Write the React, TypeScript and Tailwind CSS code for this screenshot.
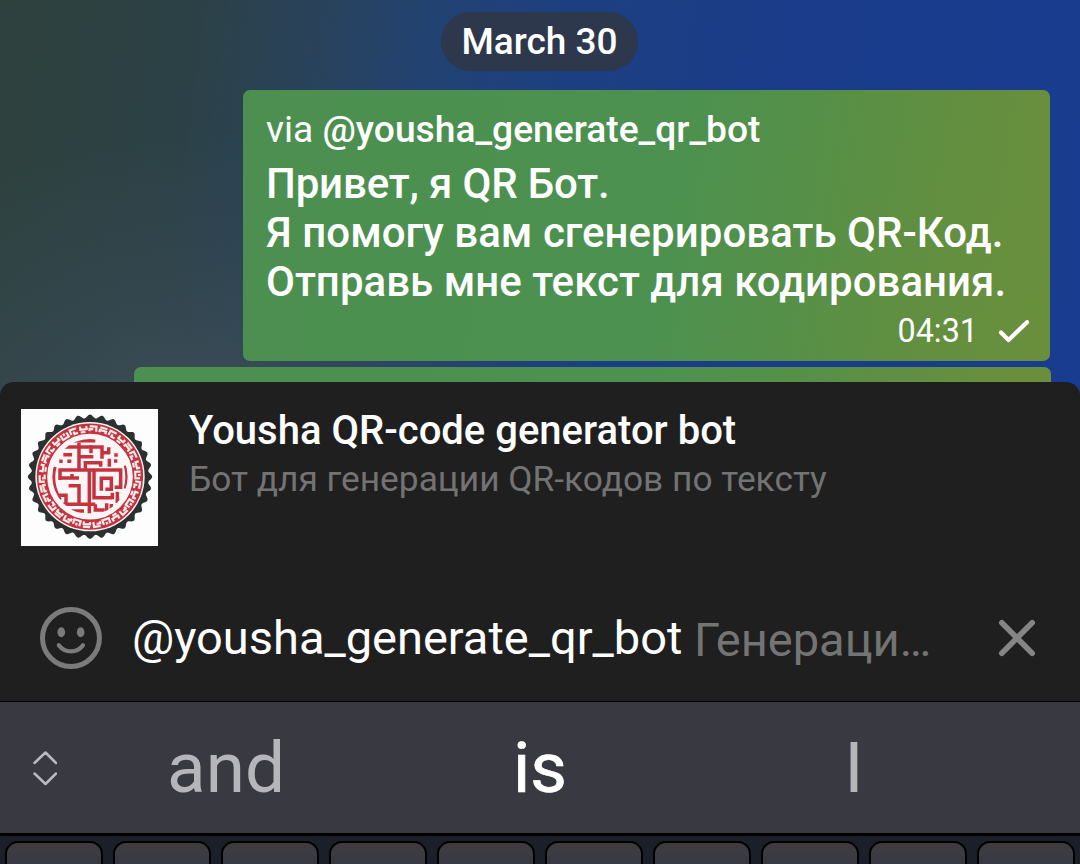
const C = 240;
const CY = 230;

const badgeEdge = (() => {
  const points: string[] = [];
  const teeth = 32;
  for (let i = 0; i <= 512; i++) {
    const a = (i / 512) * Math.PI * 2;
    const r = 181 + 5.5 * Math.cos(a * teeth);
    points.push(`${(C + r * Math.cos(a)).toFixed(1)},${(CY + r * Math.sin(a)).toFixed(1)}`);
  }
  return points.join(" ");
})();

const ringGlyphs = [
  "M-11 -7H9V8M-11 8V1H0",
  "M-10 8V-7H10M0 0V8H11",
  "M-10 -8V8H10V-6M0 -8V0",
  "M-11 -7H11M-10 8V1H9V9",
  "M-9 -9V1H10V-8M-9 9H5",
];

function BotAvatar() {
  return (
    <svg viewBox="33 27 411 411" className="size-[137px] shrink-0 bg-[#fdfdfd]">
      <defs>
        <clipPath id="maze-disc">
          <circle cx={C} cy={CY} r="113" />
        </clipPath>
      </defs>
      <polygon points={badgeEdge} fill="#2b3031" />
      <circle cx={C} cy={CY} r="164" fill="#fdf6f6" />
      <circle cx={C} cy={CY} r="144" fill="none" stroke="#c5333f" strokeWidth="31" />
      {Array.from({ length: 30 }, (_, i) => (
        <path
          key={i}
          d={ringGlyphs[(i * 3 + (i >> 2)) % 5]}
          transform={`translate(${C} ${CY}) rotate(${i * 12 + 4}) translate(0 -144)`}
          fill="none"
          stroke="#fdeeee"
          strokeWidth="6.5"
        />
      ))}
      <g fill="none" stroke="#c5333f" strokeWidth="10.5" clipPath="url(#maze-disc)">
        <path d="M186 122H256" strokeWidth="11" />
        <path d="M160 141H276V176M207 128V209M243 135V160M207 170H250M275 158H300M296 142V162" />
        <path d="M160 164H186M148 184H158M172 184H184M226 209V188H272V200M298 176V200M312 183H322M318 160V170" />
        <path d="M145 210H332V262H314M150 210V240M145 234H186V222M176 234H207M176 257H207V318M238 210V340" />
        <path d="M252 210V293H307M274 272V235H304V268H286M307 278V298" />
        <path d="M134 200C124 236 132 270 150 300M347 196Q357 230 347 266" strokeWidth="12" />
        <path d="M146 286H168V314M158 313H256M184 333H222M256 313V330H284M290 310V336M304 312V328M322 275V304H340M316 318H326" />
      </g>
    </svg>
  );
}

function SmileIcon() {
  return (
    <svg viewBox="0 0 62 62" className="size-[62px]" fill="none" stroke="#7b7b7b" strokeLinecap="round">
      <circle cx="31" cy="31" r="28.5" strokeWidth="5" />
      <ellipse cx="21.3" cy="25.3" rx="3.8" ry="5" fill="#7b7b7b" stroke="none" />
      <ellipse cx="40.7" cy="25.3" rx="3.8" ry="5" fill="#7b7b7b" stroke="none" />
      <path d="M18.8 38.2Q23.5 44.4 31 44.4T43 38.2" strokeWidth="4.2" />
    </svg>
  );
}

export default function App() {
  return (
    <div className="flex h-[864px] w-[1080px] flex-col overflow-hidden bg-[#1f1f1f] font-['Roboto',sans-serif]">
      <div className="h-[394px] shrink-0 overflow-hidden bg-[linear-gradient(98deg,#2e413d_0%,#2c4147_18%,#29425a_28%,#224271_38%,#1d3f80_50%,#1a3c8a_70%,#193c90_100%)]">
        <div className="flex h-full flex-col items-end bg-[radial-gradient(ellipse_400px_300px_at_190px_440px,#3f4e55_0%,#3a4b5599_40%,#384a5600_100%)] pt-3">
          <div className="mr-px flex h-[59px] w-[197px] shrink-0 items-center justify-center self-center rounded-full bg-[#2d384d] text-[37px] font-medium text-white">
            <span>March 30</span>
          </div>
          <div className="mt-[19px] mr-[30px] h-[271px] w-[807px] shrink-0 rounded-[7px] bg-[linear-gradient(99deg,#4c8f50_0%,#4c9150_52%,#569048_68%,#628f40_84%,#6a8f3c_100%)] pt-[15px] pr-[20px] pl-[23px] text-white">
            <p className="h-[54px] text-[37.2px] leading-[48px] whitespace-nowrap">
              via <span className="font-medium">@yousha_generate_qr_bot</span>
            </p>
            <p className="text-[42px] leading-[49px] font-medium whitespace-nowrap">
              <span className="tracking-[-0.15px]">Привет, я QR Бот.</span>
              <br />
              <span className="tracking-[0.03px]">Я помогу вам сгенерировать QR-Код.</span>
              <br />
              <span className="tracking-[0.03px]">Отправь мне текст для кодирования.</span>
            </p>
            <div className="flex h-[46px] items-center justify-end gap-[20px] pt-[5px]">
              <span className="text-[32.3px] leading-none">04:31</span>
              <svg viewBox="0 0 32 24" className="h-6 w-8" fill="none" stroke="#fff" strokeWidth="4.2" strokeLinecap="round" strokeLinejoin="round">
                <path d="M3 12.5L10.5 20L29 2.2" />
              </svg>
            </div>
          </div>
          <div className="mt-[6px] mr-[29px] h-10 w-[917px] shrink-0 rounded-[7px] bg-[linear-gradient(99deg,#4c8f50_0%,#4c9150_54%,#569048_72%,#6a8f3c_96%)]" />
        </div>
      </div>

      <div className="relative -mt-3 flex h-[319px] shrink-0 flex-col rounded-t-[14px] bg-[#1f1f1f]">
        <div className="flex h-[194px] gap-[31px] pt-[27px] pl-[21px]">
          <BotAvatar />
          <div className="whitespace-nowrap">
            <h1 className="text-[40px] leading-[44px] font-medium text-white">Yousha QR-code generator bot</h1>
            <p className="text-[35.3px] leading-[53px] text-[#737373]">Бот для генерации QR-кодов по тексту</p>
          </div>
        </div>
        <div className="flex h-[123px] items-center pl-[40px]">
          <SmileIcon />
          <div className="ml-[30px] flex w-[861px] items-center whitespace-nowrap">
            <span className="w-[562px] text-[47px] leading-[60px] text-white">@yousha_generate_qr_bot</span>
            <span className="pt-1 text-[47px] leading-[60px] text-[#747474]">Генераци…</span>
          </div>
          <svg viewBox="0 0 38 38" className="mr-[44px] ml-[6px] size-[38px] shrink-0" fill="none" stroke="#858585" strokeWidth="5.6" strokeLinecap="round">
            <path d="M3.8 3.8L34.2 34.2M34.2 3.8L3.8 34.2" />
          </svg>
        </div>
      </div>

      <div className="flex h-[135px] shrink-0 items-center border-t border-b-[3px] border-black bg-[#393941]">
        <svg viewBox="0 0 24 36" className="ml-[33px] h-9 w-6 shrink-0" fill="none" stroke="#b9b9bf" strokeWidth="2.5" strokeLinecap="round" strokeLinejoin="round">
          <path d="M1.5 13L12.5 2.5L23 13M1.5 23.5L12.5 34L23 23.5" />
        </svg>
        <span className="w-[338px] text-center text-[71px] leading-[80px] text-[#b6b6ba]">and</span>
        <span className="w-[290px] text-center text-[71px] leading-[80px] text-white [-webkit-text-stroke:0.7px_#fff]">is</span>
        <span className="w-[338px] text-center text-[71px] leading-[80px] text-[#b6b6ba]">I</span>
      </div>
      <div className="flex h-7 shrink-0 gap-[10px] bg-[#1b1f27] pt-[5px] pl-[5px]">
        {Array.from({ length: 10 }, (_, i) => (
          <div key={i} className="h-20 w-[98px] shrink-0 rounded-[13px] border-2 border-black bg-[linear-gradient(180deg,#3d3d3f_0%,#3a3a43_20%)]" />
        ))}
      </div>
    </div>
  );
}
